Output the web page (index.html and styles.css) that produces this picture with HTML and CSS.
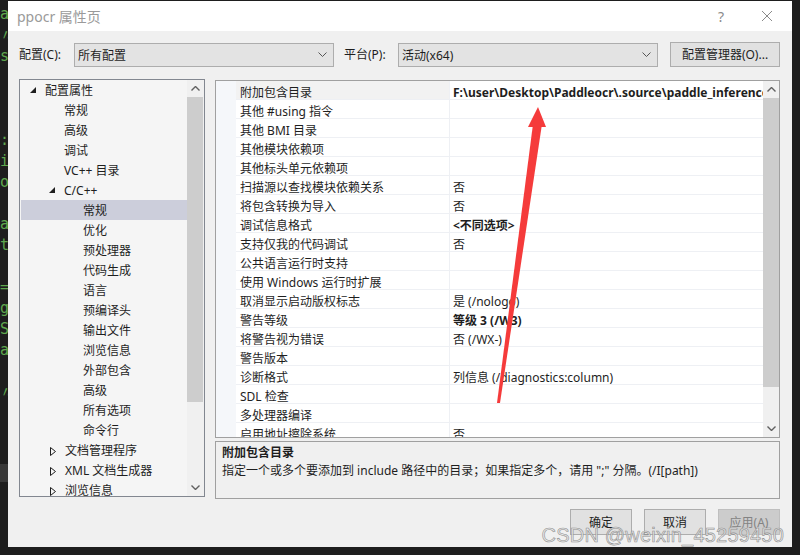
FILE: index.html
```html
<!DOCTYPE html>
<html lang="zh-CN">
<head>
  <meta charset="UTF-8" />
  <title>ppocr 属性页</title>
  <link rel="stylesheet" href="styles.css">
</head>
<body>
  <div class="code-strip">
    <div>a</div><div>〃</div><div>s</div><div></div><div></div><div></div>
    <div>:</div><div>i</div><div>o</div><div></div><div>a</div><div>t</div>
    <div></div><div>=</div><div>g</div><div>S</div><div>a</div><div></div><div>〃</div>
    <span class="strip-block"></span>
  </div>

  <div class="dialog">
    <div class="titlebar">
      <span class="title">ppocr 属性页</span>
      <span class="help">?</span>
      <svg class="close" width="12" height="12" viewBox="0 0 12 12">
        <path d="M1 1 L11 11 M11 1 L1 11" stroke="#8a8a8a" stroke-width="1" fill="none"/>
      </svg>
    </div>

    <div class="toolbar">
      <span class="lbl lbl-config">配置(C):</span>
      <div class="combo">
        <span>所有配置</span>
        <svg width="9" height="5" viewBox="0 0 9 5"><path d="M0.5 0.5 L4.5 4.5 L8.5 0.5" stroke="#555" fill="none"/></svg>
      </div>
      <span class="lbl lbl-platform">平台(P):</span>
      <div class="combo">
        <span>活动(x64)</span>
        <svg width="9" height="5" viewBox="0 0 9 5"><path d="M0.5 0.5 L4.5 4.5 L8.5 0.5" stroke="#555" fill="none"/></svg>
      </div>
      <button class="btn btn-manager">配置管理器(O)...</button>
    </div>

    <div class="main">
      <div class="tree">
        <div class="tree-list">
          <div class="node lv0"><svg class="exp" width="6" height="6" viewBox="0 0 6 6"><polygon points="6,0 6,6 0,6" fill="#1e1e1e"/></svg>配置属性</div>
          <div class="node lv1">常规</div>
          <div class="node lv1">高级</div>
          <div class="node lv1">调试</div>
          <div class="node lv1">VC++ 目录</div>
          <div class="node lv1 has-arrow"><svg class="exp" width="6" height="6" viewBox="0 0 6 6"><polygon points="6,0 6,6 0,6" fill="#1e1e1e"/></svg>C/C++</div>
          <div class="node lv2 selected">常规</div>
          <div class="node lv2">优化</div>
          <div class="node lv2">预处理器</div>
          <div class="node lv2">代码生成</div>
          <div class="node lv2">语言</div>
          <div class="node lv2">预编译头</div>
          <div class="node lv2">输出文件</div>
          <div class="node lv2">浏览信息</div>
          <div class="node lv2">外部包含</div>
          <div class="node lv2">高级</div>
          <div class="node lv2">所有选项</div>
          <div class="node lv2">命令行</div>
          <div class="node lv1 has-arrow"><svg class="col" width="6" height="9" viewBox="0 0 6 9"><polygon points="0.5,0.5 5.5,4.5 0.5,8.5" fill="none" stroke="#1e1e1e"/></svg>文档管理程序</div>
          <div class="node lv1 has-arrow"><svg class="col" width="6" height="9" viewBox="0 0 6 9"><polygon points="0.5,0.5 5.5,4.5 0.5,8.5" fill="none" stroke="#1e1e1e"/></svg>XML 文档生成器</div>
          <div class="node lv1 has-arrow"><svg class="col" width="6" height="9" viewBox="0 0 6 9"><polygon points="0.5,0.5 5.5,4.5 0.5,8.5" fill="none" stroke="#1e1e1e"/></svg>浏览信息</div>
        </div>
        <div class="vscroll tree-scroll">
          <svg class="sarrow" width="9" height="5" viewBox="0 0 9 5"><path d="M0.5 4.5 L4.5 0.5 L8.5 4.5" stroke="#606060" stroke-width="1.4" fill="none"/></svg>
          <div class="track"><div class="thumb"></div></div>
          <svg class="sarrow" width="9" height="5" viewBox="0 0 9 5"><path d="M0.5 0.5 L4.5 4.5 L8.5 0.5" stroke="#606060" stroke-width="1.4" fill="none"/></svg>
        </div>
      </div>

      <div class="right">
        <div class="grid">
          <div class="gutter"></div>
          <div class="rows">
            <div class="row first"><div class="name">附加包含目录</div><div class="val bold">F:\user\Desktop\Paddleocr\.source\paddle_inference_install_dir\paddle\include</div></div>
            <div class="row"><div class="name">其他 #using 指令</div><div class="val"></div></div>
            <div class="row"><div class="name">其他 BMI 目录</div><div class="val"></div></div>
            <div class="row"><div class="name">其他模块依赖项</div><div class="val"></div></div>
            <div class="row"><div class="name">其他标头单元依赖项</div><div class="val"></div></div>
            <div class="row"><div class="name">扫描源以查找模块依赖关系</div><div class="val">否</div></div>
            <div class="row"><div class="name">将包含转换为导入</div><div class="val">否</div></div>
            <div class="row"><div class="name">调试信息格式</div><div class="val bold">&lt;不同选项&gt;</div></div>
            <div class="row"><div class="name">支持仅我的代码调试</div><div class="val">否</div></div>
            <div class="row"><div class="name">公共语言运行时支持</div><div class="val"></div></div>
            <div class="row"><div class="name">使用 Windows 运行时扩展</div><div class="val"></div></div>
            <div class="row"><div class="name">取消显示启动版权标志</div><div class="val">是 (/nologo)</div></div>
            <div class="row"><div class="name">警告等级</div><div class="val bold">等级 3 (/W3)</div></div>
            <div class="row"><div class="name">将警告视为错误</div><div class="val">否 (/WX-)</div></div>
            <div class="row"><div class="name">警告版本</div><div class="val"></div></div>
            <div class="row"><div class="name">诊断格式</div><div class="val">列信息 (/diagnostics:column)</div></div>
            <div class="row"><div class="name">SDL 检查</div><div class="val"></div></div>
            <div class="row"><div class="name">多处理器编译</div><div class="val"></div></div>
            <div class="row"><div class="name">启用地址擦除系统</div><div class="val">否</div></div>
          </div>
          <div class="vscroll grid-scroll">
            <svg class="sarrow" width="9" height="5" viewBox="0 0 9 5"><path d="M0.5 4.5 L4.5 0.5 L8.5 4.5" stroke="#606060" stroke-width="1.4" fill="none"/></svg>
            <div class="track"><div class="thumb"></div></div>
            <svg class="sarrow" width="9" height="5" viewBox="0 0 9 5"><path d="M0.5 0.5 L4.5 4.5 L8.5 0.5" stroke="#606060" stroke-width="1.4" fill="none"/></svg>
          </div>
        </div>

        <div class="desc">
          <div class="desc-title">附加包含目录</div>
          <div class="desc-text">指定一个或多个要添加到 include 路径中的目录；如果指定多个，请用 ";" 分隔。(/I[path])</div>
        </div>
      </div>
    </div>

    <div class="actions">
      <button class="btn">确定</button>
      <button class="btn">取消</button>
      <button class="btn disabled">应用(A)</button>
    </div>
  </div>

  <div class="right-strip"></div>

  <svg class="arrow" width="800" height="555" viewBox="0 0 800 555">
    <polygon points="533,124 542,124 500,403 497,403" fill="#f53b3b"/>
    <polygon points="538,107 528,127 546,127" fill="#f53b3b"/>
  </svg>

  <div class="watermark">CSDN @weixin_45259450</div>
</body>
</html>
```

FILE: styles.css
```css
body {
  margin: 0;
  width: 800px;
  height: 555px;
  overflow: hidden;
  background: #1e1e1e;
  display: flex;
  position: relative;
  font-family: "Noto Sans", "Noto Sans CJK SC", sans-serif;
  font-size: 12px;
  color: #1e1e1e;
}

.code-strip {
  width: 8px;
  flex: none;
  overflow: hidden;
  padding-top: 4px;
  font-family: "DejaVu Sans Mono", monospace;
  font-size: 15px;
  line-height: 21px;
  color: #5fa84e;
}

.code-strip div {
  height: 21px;
}

.strip-block {
  display: block;
  height: 18px;
  margin-top: 61px;
  background: #383838;
}

.dialog {
  width: 784px;
  height: 546px;
  margin-top: 1px;
  background: #f0f0f0;
  display: flex;
  flex-direction: column;
  flex: none;
}

.titlebar {
  height: 30px;
  background: #ffffff;
  display: flex;
  align-items: center;
  padding-left: 9px;
}

.title {
  font-size: 14px;
  color: #9a9a9a;
  flex: 1;
}

.help {
  font-size: 14px;
  color: #8a8a8a;
  margin-right: 37px;
}

.close {
  margin-right: 19px;
}

.toolbar {
  display: flex;
  align-items: center;
  height: 26px;
  margin-top: 10px;
  padding-left: 11px;
}

.lbl {
  font-size: 12px;
  color: #1e1e1e;
}

.lbl-config {
  width: 55px;
}

.lbl-platform {
  width: 54px;
  margin-left: 10px;
}

.combo {
  width: 260px;
  height: 24px;
  box-sizing: border-box;
  margin-top: 1px;
  border: 1px solid #adadad;
  background: #e3e3e3;
  display: flex;
  align-items: center;
  justify-content: space-between;
  padding: 0 6px 0 3px;
}

.btn {
  font-family: inherit;
  font-size: 12px;
  color: #1e1e1e;
  background: #e1e1e1;
  border: 1px solid #adadad;
  padding: 0;
  height: 26px;
  width: 62px;
}

.btn-manager {
  width: 110px;
  height: 25px;
  margin-left: 12px;
}

.main {
  display: flex;
  gap: 10px;
  margin-top: 12px;
  padding-left: 11px;
  height: 420px;
}

.tree {
  width: 186px;
  height: 418px;
  box-sizing: border-box;
  border: 1px solid #828790;
  background: #f5f5f5;
  display: flex;
}

.tree-list {
  flex: 1;
  overflow: hidden;
}

.node {
  height: 20px;
  line-height: 20px;
  padding-top: 1px;
  box-sizing: border-box;
  display: flex;
  align-items: center;
  white-space: nowrap;
}

.lv0 { padding-left: 10px; }
.lv1 { padding-left: 44px; }
.lv2 { padding-left: 63px; }
.lv1.has-arrow { padding-left: 29px; }

.exp {
  margin-right: 9px;
  margin-top: -2px;
}

.col {
  margin-right: 9px;
  margin-left: 1px;
  margin-top: 1px;
}

.selected {
  background: #cccedb;
  margin-left: 1px;
  padding-left: 62px;
}

.vscroll {
  width: 17px;
  flex: none;
  display: flex;
  flex-direction: column;
  align-items: center;
  background: #f0f0f0;
}

.sarrow {
  margin: 6px 0;
  flex: none;
}

.track {
  flex: 1;
  width: 100%;
}

.tree-scroll .thumb {
  height: 305px;
  margin-right: 1px;
  background: #cdcdcd;
}

.right {
  width: 565px;
  display: flex;
  flex-direction: column;
  gap: 3px;
  padding-top: 1px;
}

.grid {
  height: 358px;
  box-sizing: border-box;
  border: 1px solid #a0a0a0;
  background: #ffffff;
  display: flex;
}

.gutter {
  width: 20px;
  background: #f5f7fa;
}

.rows {
  width: 527px;
  overflow: hidden;
}

.row {
  display: flex;
  height: 19px;
  box-sizing: border-box;
  border-bottom: 1px solid #eef0f4;
  white-space: nowrap;
}

.name,
.val {
  height: 18px;
  line-height: 18px;
  padding-top: 3px;
  box-sizing: border-box;
}

.name {
  width: 214px;
  flex: none;
  padding-left: 4px;
  border-right: 1px solid #eef0f4;
}

.first .name {
  background: #f2f2f2;
}

.val {
  flex: 1;
  padding-left: 3px;
  overflow-x: clip;
}

.bold {
  font-weight: bold;
}

.grid-scroll {
  width: 16px;
}

.grid-scroll .thumb {
  height: 289px;
  background: #cdcdcd;
}

.desc {
  height: 58px;
  box-sizing: border-box;
  border: 1px solid #a0a0a0;
  padding: 2px 6px;
  line-height: 18px;
}

.desc-title {
  font-weight: bold;
}

.actions {
  display: flex;
  justify-content: flex-end;
  gap: 12px;
  padding-right: 12px;
  margin-top: 10px;
}

.btn.disabled {
  background: #cccccc;
  border-color: #bfbfbf;
  color: #838383;
}

.right-strip {
  flex: 1;
  background: #1e1e1e;
}

.arrow {
  position: absolute;
  left: 0;
  top: 0;
  pointer-events: none;
}

.watermark {
  position: absolute;
  right: 16px;
  top: 524px;
  font-family: "Liberation Sans", Arial, sans-serif;
  font-size: 20px;
  color: rgba(230, 230, 230, 0.85);
  -webkit-text-stroke: 0.6px rgba(120, 120, 120, 0.8);
  letter-spacing: 0.2px;
}
```
